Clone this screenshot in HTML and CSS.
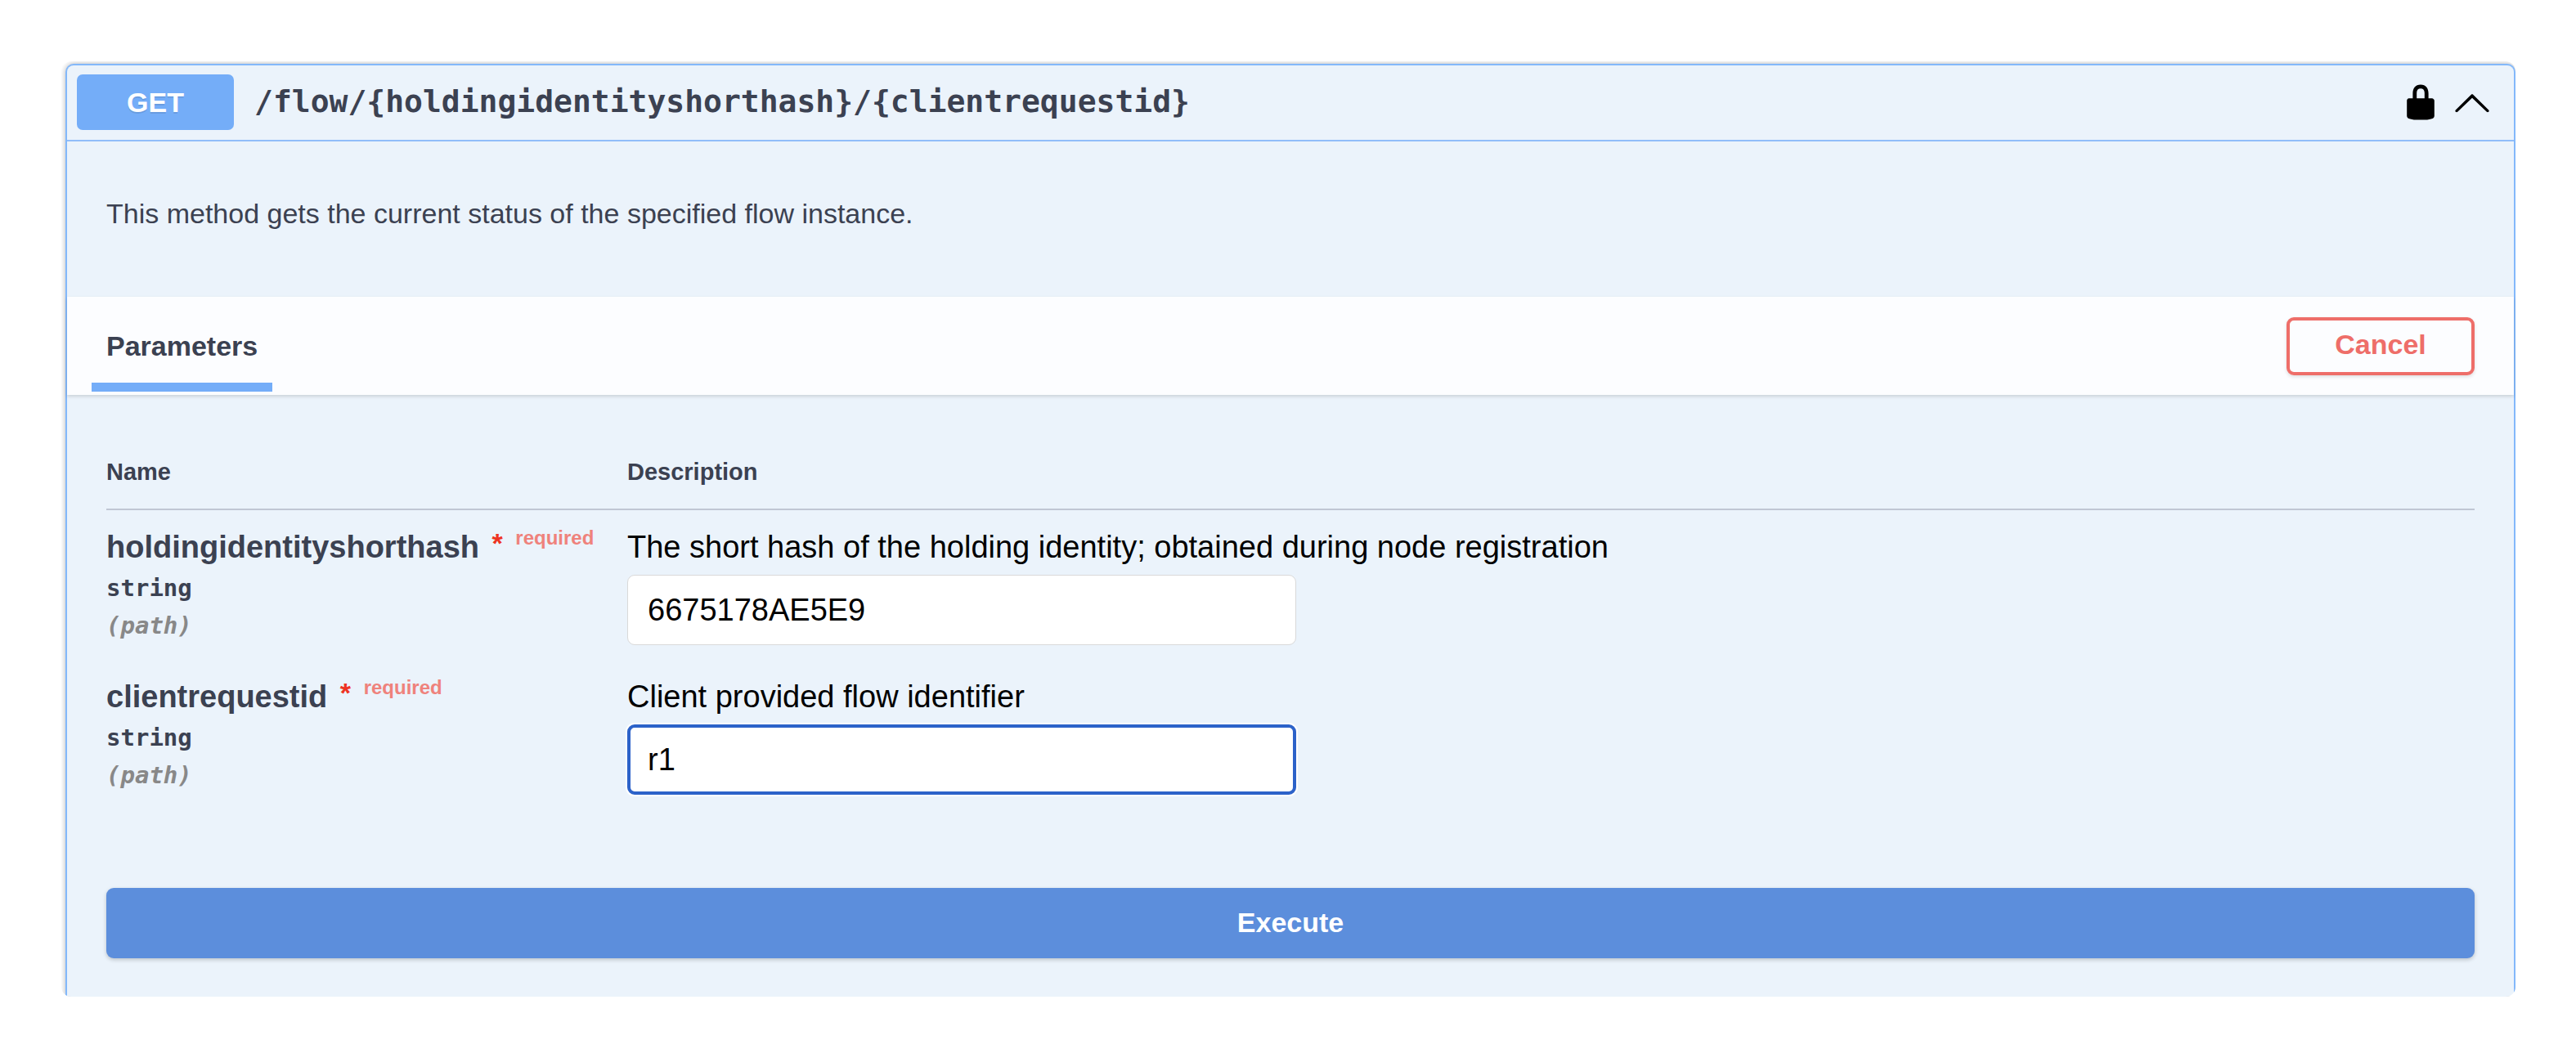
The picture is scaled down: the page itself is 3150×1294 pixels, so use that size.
FILE: index.html
```html
<!DOCTYPE html>
<html lang="en">
<head>
<meta charset="utf-8">
<title>GET /flow/{holdingidentityshorthash}/{clientrequestid}</title>
<link rel="stylesheet" href="styles.css">
</head>
<body>
<main class="frame">
  <section class="opblock">
    <header class="summary">
      <span class="method">GET</span>
      <h1 class="path">/flow/{holdingidentityshorthash}/{clientrequestid}</h1>
      <button class="icon-button" type="button" aria-label="Authorization">
        <svg class="icon" viewBox="0 0 20 20" aria-hidden="true"><path d="M15.8 8H14V5.6C14 2.703 12.665 1 10 1 7.334 1 6 2.703 6 5.6V8H4c-.553 0-1 .646-1 1.199V17c0 .549.428 1.139.951 1.307l1.197.387C5.672 18.861 6.55 19 7.1 19h5.8c.549 0 1.428-.139 1.951-.307l1.196-.387c.524-.167.953-.757.953-1.306V9.199C17 8.646 16.352 8 15.8 8zM12 8H8V5.199C8 3.754 8.797 3 10 3c1.203 0 2 .754 2 2.199V8z"/></svg>
      </button>
      <button class="icon-button" type="button" aria-label="Collapse operation" aria-expanded="true">
        <svg class="icon" viewBox="0 0 20 20" aria-hidden="true"><path d="M17.418 14.908C17.69 15.176 18.127 15.176 18.397 14.908 18.667 14.64 18.668 14.207 18.397 13.939L10.489 6.109C10.219 5.841 9.782 5.841 9.51 6.109L1.602 13.939C1.332 14.207 1.332 14.64 1.602 14.908 1.873 15.176 2.311 15.176 2.581 14.908L10 7.767 17.418 14.908Z"/></svg>
      </button>
    </header>
    <p class="description">This method gets the current status of the specified flow instance.</p>
    <div class="section-header">
      <h2 class="tab">Parameters</h2>
      <button class="cancel" type="button">Cancel</button>
    </div>
    <div class="parameters">
      <table class="table">
        <thead>
          <tr><th class="col-name" scope="col">Name</th><th scope="col">Description</th></tr>
        </thead>
        <tbody>
          <tr>
            <td>
              <label class="name" for="hash">holdingidentityshorthash <span class="star">*</span> <span class="required">required</span></label>
              <div class="type">string</div>
              <div class="in">(path)</div>
            </td>
            <td>
              <p class="about">The short hash of the holding identity; obtained during node registration</p>
              <input class="field" id="hash" type="text" value="6675178AE5E9">
            </td>
          </tr>
          <tr>
            <td>
              <label class="name" for="request">clientrequestid <span class="star">*</span> <span class="required">required</span></label>
              <div class="type">string</div>
              <div class="in">(path)</div>
            </td>
            <td>
              <p class="about">Client provided flow identifier</p>
              <input class="field field-active" id="request" type="text" value="r1">
            </td>
          </tr>
        </tbody>
      </table>
      <button class="execute" type="button">Execute</button>
    </div>
  </section>
</main>
</body>
</html>
```
FILE: styles.css
```css
* {
  box-sizing: border-box;
}

body {
  margin: 0;
  padding: 75px 74px 75px 75px;
  background: #fff;
  color: #3b4151;
  font-family: "Liberation Sans", Arial, sans-serif;
  font-size: 34px;
}

h1, h2, p {
  margin: 0;
}

button, input {
  font-family: inherit;
}

.frame {
  padding: 3px 0 0 5px;
  border-radius: 12px;
  overflow: hidden;
}

.opblock {
  border: 2px solid #83b8fa;
  border-bottom: 0;
  border-radius: 10px 10px 0 0;
  background: #ebf3fb;
  box-shadow: 0 0 7px rgba(0, 0, 0, .3);
}

.summary {
  display: flex;
  align-items: center;
  padding: 11px 27px 12px 12px;
  border-bottom: 2px solid #91bdf9;
}

.method {
  width: 192px;
  border-radius: 7px;
  background: #74adf8;
  color: #fff;
  font-weight: 700;
  line-height: 68px;
  text-align: center;
  text-shadow: 0 2px 0 rgba(0, 0, 0, .1);
}

.path {
  flex: 1;
  padding: 0 0 2px 25px;
  font-family: "DejaVu Sans Mono", monospace;
  font-size: 38px;
  line-height: 48px;
}

.icon-button {
  display: flex;
  margin-left: 15px;
  padding: 0;
  border: 0;
  background: none;
}

.icon {
  width: 48px;
  height: 48px;
}

.description {
  padding: 68px 48px 82px;
  line-height: 40px;
}

.section-header {
  display: flex;
  align-items: center;
  justify-content: space-between;
  height: 120px;
  padding: 0 48px 0 30px;
  background: #fcfdff;
  box-shadow: 0 2px 4px rgba(0, 0, 0, .14);
}

.tab {
  align-self: flex-end;
  margin-bottom: 4px;
  padding: 0 18px 25px;
  border-bottom: 11px solid #74adf8;
  font-size: 34px;
  line-height: 40px;
}

.cancel {
  width: 230px;
  height: 71px;
  padding: 0 0 3px;
  border: 4px solid #ee6e69;
  border-radius: 9px;
  background: transparent;
  box-shadow: 0 2px 4px rgba(0, 0, 0, .12);
  color: #ee6e69;
  font-size: 34px;
  font-weight: 700;
}

.parameters {
  padding: 76px 48px 47px;
}

.table {
  width: 100%;
  margin-bottom: 96px;
  border-collapse: collapse;
}

.table th {
  padding: 0 0 27px;
  border-bottom: 2px solid #c0c6d4;
  font-size: 29px;
  line-height: 36px;
  text-align: left;
}

.table .col-name {
  width: 637px;
}

.table td {
  padding: 22px 0 15px;
  vertical-align: top;
}

.name {
  display: block;
  margin-bottom: 4px;
  font-size: 38px;
  font-weight: 700;
  line-height: 46px;
  white-space: nowrap;
}

.star {
  margin: 0 5px;
  color: #ee3322;
  font-size: 34px;
  line-height: 24px;
  vertical-align: 6px;
}

.required {
  color: #ef827c;
  font-size: 24px;
  line-height: 24px;
  vertical-align: 16px;
}

.type, .in {
  font-family: "DejaVu Sans Mono", monospace;
  font-size: 29px;
  font-weight: 700;
  line-height: 46px;
}

.in {
  color: #888;
  font-style: italic;
}

.about {
  color: #000;
  font-size: 38px;
  line-height: 46px;
}

.field {
  display: block;
  width: 818px;
  height: 86px;
  margin: 11px 0 3px;
  padding: 0 24px;
  border: 1px solid #d9d9d9;
  border-radius: 9px;
  background: #fff;
  color: #000;
  font-size: 38px;
}

.field-active {
  padding: 0 21px;
  border: 4px solid #2c62c9;
  box-shadow: 0 0 0 2px #fff;
}

.execute {
  display: block;
  width: 100%;
  height: 86px;
  padding: 0 0 2px;
  border: 0;
  border-radius: 9px;
  background: #5c8edc;
  box-shadow: 0 2px 5px rgba(0, 0, 0, .2);
  color: #fff;
  font-size: 34px;
  font-weight: 700;
}
```
